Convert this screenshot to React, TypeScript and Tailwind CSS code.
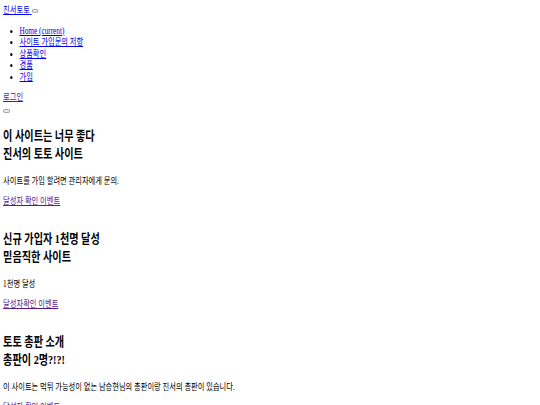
import React from "react";

const font = {
  fontFamily: '"Liberation Serif", "Noto Sans CJK KR", serif',
};

function Section({ l1, l2, p, link }: { l1: React.ReactNode; l2: React.ReactNode; p: string; link: string }) {
  return (
    <section className="mb-[23px]">
      <h2 className="text-[13px] font-bold leading-[18px] text-black">
        <div>{l1}</div>
        <div>{l2}</div>
      </h2>
      <p className="mt-[12px] leading-[12px]">{p}</p>
      <p className="mt-[8px] leading-[12px]">
        <a href="#" className="text-[#551A8B] underline">
          {link}
        </a>
      </p>
    </section>
  );
}

export default function App() {
  return (
    <div className="w-[540px] h-[405px] overflow-hidden bg-white">
      <div
        className="w-[692px] origin-top-left scale-x-[0.78] pl-[4px] pt-[4px] text-[9.3px] text-black"
        style={font}
      >
        <nav>
          <div className="leading-[12px]">
            <a href="#" className="text-[#0000EE] underline">
              진서토토{" "}
            </a>
            <button className="inline-block w-[8px] h-[3.5px] rounded-[2px] border border-[#9a9a9a] bg-[#e6e6e6] align-middle p-0"></button>
          </div>
          <ul className="mt-[10px] list-disc pl-[21px]">
            <li className="leading-[11.4px]">
              <a href="#" className="text-[#0000EE] underline">
                Home (current)
              </a>
            </li>
            <li className="leading-[11.4px]">
              <a href="#" className="text-[#0000EE] underline">
                사이트 가입문의 저항
              </a>
            </li>
            <li className="leading-[11.4px]">
              <a href="#" className="text-[#0000EE] underline">
                상품확인
              </a>
            </li>
            <li className="leading-[11.4px]">
              <a href="#" className="text-[#0000EE] underline">
                경품
              </a>
            </li>
            <li className="leading-[11.4px]">
              <a href="#" className="text-[#0000EE] underline">
                가입
              </a>
            </li>
          </ul>
          <div className="mt-[8px] leading-[12px]">
            <a href="#" className="text-[#551A8B] underline">
              로그인
            </a>
          </div>
          <div className="mt-[4px] leading-[6px]">
            <button className="inline-block w-[9px] h-[3.5px] rounded-[2px] border border-[#9a9a9a] bg-[#e6e6e6] align-middle p-0"></button>
          </div>
        </nav>
        <main className="mt-[14px]">
          <Section
            l1="이 사이트는 너무 좋다"
            l2="진서의 토토 사이트"
            p="사이트를 가입 할려면 관리자에게 문의."
            link="달성자 확인 이벤트"
          />
          <Section
            l1="신규 가입자 1천명 달성"
            l2="믿음직한 사이트"
            p="1천명 달성"
            link="달성자확인 이벤트"
          />
          <Section
            l1="토토 총판 소개"
            l2="총판이 2명?!?!"
            p="이 사이트는 먹튀 가능성이 없는 남승현님의 총판이랑 진서의 총판이 있습니다."
            link="달성자 확인 이벤트"
          />
        </main>
      </div>
    </div>
  );
}
